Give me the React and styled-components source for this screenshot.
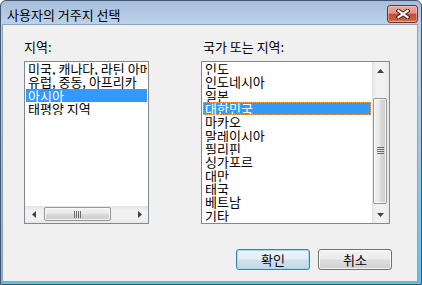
import styled, { createGlobalStyle } from 'styled-components';

const GlobalStyle = createGlobalStyle`
  html,
  body {
    margin: 0;
    padding: 0;
    background: #ffffff;
  }

  body {
    font-family: 'Noto Sans CJK KR', 'Noto Sans', sans-serif;
    font-size: 13px;
  }
`;

const WindowStyled = styled.div`
  width: 422px;
  height: 285px;
  box-sizing: border-box;
  padding: 0 3px 2px 1px;

  border: 1px solid #3f5570;
  border-radius: 6px 6px 0 0;
  overflow: hidden;

  display: flex;
  flex-direction: column;

  background: linear-gradient(
    to bottom,
    #a6bedb 0px,
    #bcd2ea 23px,
    #a4c9e8 45%,
    #62bfe9 100%
  );
`;

const TitleBar = styled.div`
  height: 23px;
  padding-left: 5px;

  display: flex;
  align-items: flex-start;
  justify-content: space-between;
`;

const Title = styled.span`
  margin-top: 6px;
  font-size: 13px;
  line-height: 15px;
  color: #000;
`;

const CloseButton = styled.div`
  margin-top: 4px;
  width: 31px;
  height: 18px;
  box-sizing: border-box;

  border: 1px solid #7a2f24;
  border-radius: 3px;
  box-shadow: inset 0 0 0 1px rgba(255, 220, 210, 0.45);

  display: flex;
  align-items: center;
  justify-content: center;

  background: linear-gradient(
    to bottom,
    #e9a898 0%,
    #dc9483 45%,
    #c64b36 52%,
    #cc5a3c 85%,
    #e08860 100%
  );
`;

const Client = styled.div`
  flex: 1;
  box-sizing: border-box;
  padding: 15px 25px 0 21px;

  background-color: #f0f0f0;
  border: 1px solid #8da3bd;

  display: flex;
  flex-direction: column;
`;

const Panels = styled.div`
  display: flex;
  gap: 52px;
`;

const Panel = styled.div`
  width: ${({ $width }) => $width}px;
  display: flex;
  flex-direction: column;
`;

const Label = styled.div`
  height: 14px;
  margin-bottom: 7px;
  padding-left: ${({ $indent }) => $indent || 0}px;

  font-size: 13px;
  line-height: 14px;
  color: #000;
  white-space: nowrap;
`;

const ListBox = styled.div`
  height: 163px;
  box-sizing: border-box;

  border: 1px solid #828790;
  background-color: #fff;

  display: flex;
  flex-direction: ${({ $horizontal }) => ($horizontal ? 'column' : 'row')};
`;

const Items = styled.div`
  flex: 1;
  min-width: 0;
  padding: 0 1px;
  overflow: hidden;
`;

const Item = styled.div`
  height: 13.33px;
  padding-left: 2px;

  font-size: 13px;
  line-height: 13.33px;
  white-space: nowrap;
  overflow: hidden;

  color: ${({ $selected }) => ($selected ? '#fff' : '#000')};
  background-color: ${({ $selected }) => ($selected ? '#3399ff' : 'transparent')};
  outline: ${({ $focused }) => ($focused ? '1px dotted #f2a04a' : 'none')};
  outline-offset: -1px;
`;

const ScrollV = styled.div`
  width: 17px;
  flex-shrink: 0;

  display: flex;
  flex-direction: column;

  background: linear-gradient(
    to right,
    #e4e4e4,
    #f1f1f1 25%,
    #f1f1f1 75%,
    #e8e8e8
  );
`;

const ScrollH = styled.div`
  height: 17px;
  flex-shrink: 0;

  display: flex;
  flex-direction: row;

  background: linear-gradient(
    to bottom,
    #e4e4e4,
    #f1f1f1 25%,
    #f1f1f1 75%,
    #e8e8e8
  );
`;

const ArrowBtn = styled.div`
  width: 17px;
  height: 17px;
  flex-shrink: 0;

  display: flex;
  align-items: center;
  justify-content: center;
`;

const Thumb = styled.div`
  box-sizing: border-box;
  border: 1px solid #979797;
  border-radius: 2px;
  box-shadow: inset 0 0 0 1px rgba(255, 255, 255, 0.7);

  display: flex;
  align-items: center;
  justify-content: center;

  ${({ $vertical }) =>
    $vertical
      ? `
    height: 106px;
    margin: 19px 2px 0 1px;
    background: linear-gradient(to right, #f3f3f3, #e8e8e8 45%, #d9d9d9 55%, #cdcdcd);
  `
      : `
    width: 67px;
    margin: 1px 0 2px 2px;
    background: linear-gradient(to bottom, #f3f3f3, #e8e8e8 45%, #d9d9d9 55%, #cdcdcd);
  `}
`;

const Spacer = styled.div`
  flex: 1;
`;

const ButtonRow = styled.div`
  margin-top: 25px;

  display: flex;
  justify-content: flex-end;
  gap: 8px;
`;

const Button = styled.button`
  width: 74px;
  height: 21px;
  box-sizing: border-box;
  padding: 0;

  font-family: inherit;
  font-size: 13px;
  line-height: 14px;
  color: #000;

  border-radius: 3px;
  border: 1px solid ${({ $default }) => ($default ? '#3c7fb1' : '#707070')};
  box-shadow: inset 0 0 0 1px
    ${({ $default }) => ($default ? '#9fdcf7' : 'rgba(255, 255, 255, 0.8)')};
  background: ${({ $default }) =>
    $default
      ? 'linear-gradient(to bottom, #edf5fa 0%, #e3edf4 48%, #d3e0ea 52%, #c6d7e4 100%)'
      : 'linear-gradient(to bottom, #f2f2f2 0%, #ebebeb 48%, #dddddd 52%, #cfcfcf 100%)'};
`;

const Arrow = ({ dir }) => {
  const pts = {
    up: '0,4 3.5,0 7,4',
    down: '0,0 3.5,4 7,0',
    left: '4,0 0,3.5 4,7',
    right: '0,0 4,3.5 0,7',
  }[dir];
  const vertical = dir === 'up' || dir === 'down';
  return (
    <svg width={vertical ? 7 : 4} height={vertical ? 4 : 7}>
      <polygon points={pts} fill="#404040" />
    </svg>
  );
};

const Grip = ({ vertical }) =>
  vertical ? (
    <svg width="7" height="8">
      {[0, 2, 4, 6].map((y) => (
        <rect key={y} x="0" y={y} width="7" height="1" fill="#6e6e6e" />
      ))}
    </svg>
  ) : (
    <svg width="8" height="7">
      {[0, 2, 4, 6].map((x) => (
        <rect key={x} x={x} y="0" width="1" height="7" fill="#6e6e6e" />
      ))}
    </svg>
  );

const regions = ['미국, 캐나다, 라틴 아메리카', '유럽, 중동, 아프리카', '아시아', '태평양 지역'];

const countries = [
  '인도',
  '인도네시아',
  '일본',
  '대한민국',
  '마카오',
  '말레이시아',
  '필리핀',
  '싱가포르',
  '대만',
  '태국',
  '베트남',
  '기타',
];

const App = () => {
  return (
    <>
      <GlobalStyle />
      <WindowStyled>
        <TitleBar>
          <Title>사용자의 거주지 선택</Title>
          <CloseButton>
            <svg width="14" height="10" viewBox="0 0 14 10">
              <path d="M2.5 1.8 L11.5 8.2 M11.5 1.8 L2.5 8.2" stroke="#3d1a14" strokeWidth="4" strokeLinecap="square" />
              <path d="M2.5 1.8 L11.5 8.2 M11.5 1.8 L2.5 8.2" stroke="#ffffff" strokeWidth="2.2" strokeLinecap="square" />
            </svg>
          </CloseButton>
        </TitleBar>

        <Client>
          <Panels>
            <Panel $width={125}>
              <Label>지역:</Label>
              <ListBox $horizontal>
                <Items>
                  {regions.map((r, i) => (
                    <Item key={r} $selected={i === 2}>
                      {r}
                    </Item>
                  ))}
                </Items>
                <ScrollH>
                  <ArrowBtn>
                    <Arrow dir="left" />
                  </ArrowBtn>
                  <Thumb>
                    <Grip />
                  </Thumb>
                  <Spacer />
                  <ArrowBtn>
                    <Arrow dir="right" />
                  </ArrowBtn>
                </ScrollH>
              </ListBox>
            </Panel>

            <Panel $width={189}>
              <Label $indent={2}>국가 또는 지역:</Label>
              <ListBox>
                <Items>
                  {countries.map((c, i) => (
                    <Item key={c} $selected={i === 3} $focused={i === 3}>
                      {c}
                    </Item>
                  ))}
                </Items>
                <ScrollV>
                  <ArrowBtn>
                    <Arrow dir="up" />
                  </ArrowBtn>
                  <Thumb $vertical>
                    <Grip vertical />
                  </Thumb>
                  <Spacer />
                  <ArrowBtn>
                    <Arrow dir="down" />
                  </ArrowBtn>
                </ScrollV>
              </ListBox>
            </Panel>
          </Panels>

          <ButtonRow>
            <Button $default>확인</Button>
            <Button>취소</Button>
          </ButtonRow>
        </Client>
      </WindowStyled>
    </>
  );
};

export default App;
